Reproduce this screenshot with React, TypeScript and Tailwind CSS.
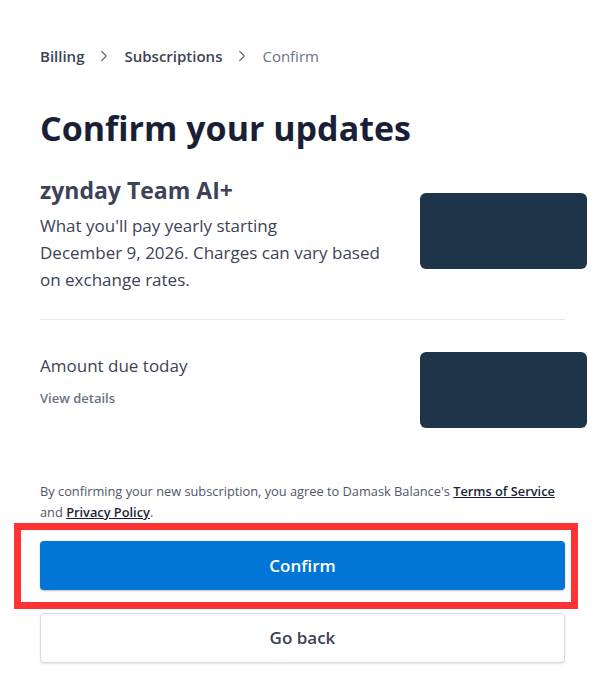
import { ChevronRight } from "lucide-react";

const font = { fontFamily: '"Open Sans", "Noto Sans", sans-serif' };

function Crumbs() {
  return (
    <nav className="flex items-center gap-[11px] text-[15px] leading-5">
      <span className="font-semibold text-[#3c4257]">Billing</span>
      <ChevronRight className="h-[18px] w-[18px] text-[#697386]" strokeWidth={1.75} />
      <span className="font-semibold text-[#3c4257]">Subscriptions</span>
      <ChevronRight className="h-[18px] w-[18px] text-[#697386]" strokeWidth={1.75} />
      <span className="text-[#697386]">Confirm</span>
    </nav>
  );
}

function Redacted() {
  return <div className="h-[76px] w-[167px] shrink-0 rounded-[6px] bg-[#1e3448]" />;
}

export default function App() {
  return (
    <div style={font} className="min-h-[678px] w-[616px] bg-white pl-10 pt-[46px]">
      <Crumbs />

      <h1 className="mt-[42px] text-[34px] font-bold leading-10 text-[#1a1f36]">
        Confirm your updates
      </h1>

      <div className="mt-[28px] flex w-[547px] items-start justify-between">
        <div className="w-[355px]">
          <div className="text-[23px] font-bold leading-7 text-[#3c4257]">zynday Team AI+</div>
          <p className="mt-[8px] text-[17px] leading-[27px] text-[#3c4257]">
            What you'll pay yearly starting
            <br />
            December 9, 2026. Charges can vary based on exchange rates.
          </p>
        </div>
        <div className="mt-[17px]">
          <Redacted />
        </div>
      </div>

      <div className="mt-[26px] h-px w-[525px] bg-[#e6e8ee]" />

      <div className="mt-[32px] flex w-[547px] items-start justify-between">
        <div>
          <div className="text-[17px] leading-7 text-[#3c4257]">Amount due today</div>
          <div className="mt-[9px] text-[13px] font-semibold leading-[18px] text-[#697386]">View details</div>
        </div>
        <Redacted />
      </div>

      <p className="mt-[53px] w-[525px] text-[12.8px] leading-[21px] text-[#4f566b]">
        By confirming your new subscription, you agree to Damask Balance's{" "}
        <a className="font-semibold text-[#1a1f36] underline">Terms of Service</a> and{" "}
        <a className="font-semibold text-[#1a1f36] underline">Privacy Policy</a>.
      </p>

      <div className="relative mt-[18px] w-[525px]">
        <button className="flex h-[49px] w-full items-center justify-center rounded-[4px] bg-[#0176d6] text-[17px] font-semibold text-white shadow-[0_1px_2px_rgba(0,0,0,0.25)]">
          Confirm
        </button>
        <div className="pointer-events-none absolute -bottom-[19px] -left-[26px] -right-[13px] -top-[18px] border-[7px] border-[#ff3333]" />
      </div>

      <button className="mt-[23px] flex h-[50px] w-[525px] items-center justify-center rounded-[4px] border border-[#d8dbe2] bg-white text-[17px] font-semibold text-[#3c4257] shadow-[0_1px_2px_rgba(0,0,0,0.12)]">
        Go back
      </button>
    </div>
  );
}
